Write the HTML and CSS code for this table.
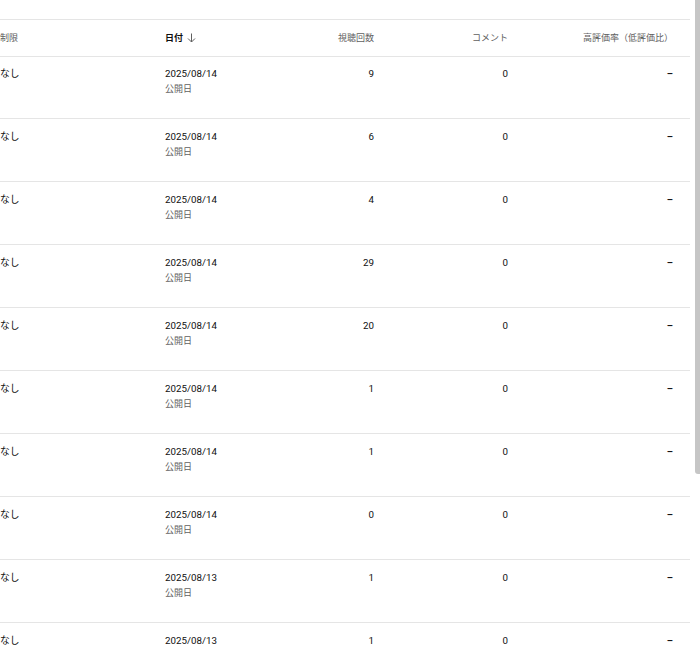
FILE: index.html
```html
<!DOCTYPE html>
<html lang="ja">
<head>
<meta charset="utf-8">
<link rel="stylesheet" href="styles.css">
</head>
<body>
<div class="table">
  <div class="row head">
    <div class="cell">制限</div>
    <div class="cell sorted">日付 <svg class="arrow" width="9" height="10" viewBox="0 0 9 10"><path d="M4.5 0.5V9M1 5.5L4.5 9L8 5.5" fill="none" stroke="#606060" stroke-width="1"/></svg></div>
    <div class="cell num">視聴回数</div>
    <div class="cell num">コメント</div>
    <div class="cell num">高評価率（低評価比）</div>
  </div>
  <div class="row"><div class="cell">なし</div><div class="cell date">2025/08/14<span class="sub">公開日</span></div><div class="cell num">9</div><div class="cell num">0</div><div class="cell num dash">–</div></div>
  <div class="row"><div class="cell">なし</div><div class="cell date">2025/08/14<span class="sub">公開日</span></div><div class="cell num">6</div><div class="cell num">0</div><div class="cell num dash">–</div></div>
  <div class="row"><div class="cell">なし</div><div class="cell date">2025/08/14<span class="sub">公開日</span></div><div class="cell num">4</div><div class="cell num">0</div><div class="cell num dash">–</div></div>
  <div class="row"><div class="cell">なし</div><div class="cell date">2025/08/14<span class="sub">公開日</span></div><div class="cell num">29</div><div class="cell num">0</div><div class="cell num dash">–</div></div>
  <div class="row"><div class="cell">なし</div><div class="cell date">2025/08/14<span class="sub">公開日</span></div><div class="cell num">20</div><div class="cell num">0</div><div class="cell num dash">–</div></div>
  <div class="row"><div class="cell">なし</div><div class="cell date">2025/08/14<span class="sub">公開日</span></div><div class="cell num">1</div><div class="cell num">0</div><div class="cell num dash">–</div></div>
  <div class="row"><div class="cell">なし</div><div class="cell date">2025/08/14<span class="sub">公開日</span></div><div class="cell num">1</div><div class="cell num">0</div><div class="cell num dash">–</div></div>
  <div class="row"><div class="cell">なし</div><div class="cell date">2025/08/14<span class="sub">公開日</span></div><div class="cell num">0</div><div class="cell num">0</div><div class="cell num dash">–</div></div>
  <div class="row"><div class="cell">なし</div><div class="cell date">2025/08/13<span class="sub">公開日</span></div><div class="cell num">1</div><div class="cell num">0</div><div class="cell num dash">–</div></div>
  <div class="row"><div class="cell">なし</div><div class="cell date">2025/08/13<span class="sub">公開日</span></div><div class="cell num">1</div><div class="cell num">0</div><div class="cell num dash">–</div></div>
</div>
<div class="scrollbar"></div>
</body>
</html>
```
FILE: styles.css
```css
html, body {
  margin: 0;
  padding: 0;
  background: #ffffff;
  overflow: hidden;
}
body {
  font-family: Roboto, "Noto Sans CJK JP", sans-serif;
  font-size: 9.75px;
  color: #0f0f0f;
  height: 651px;
  position: relative;
}
.table {
  padding-top: 19px;
  width: 690px;
}
.row {
  display: grid;
  grid-template-columns: 165px 100px 109px 134px 165px;
  height: 62px;
  border-bottom: 1px solid #e5e5e5;
  box-sizing: content-box;
}
.row .cell {
  padding-top: 10px;
  line-height: 15px;
}
.head + .row {
  height: 61px;
}
.head + .row .cell {
  padding-top: 9px;
}
.row.head {
  height: 36px;
  border-top: 1px solid #e5e5e5;
  align-items: center;
  color: #606060;
  font-size: 9px;
}
.row.head .cell {
  padding-top: 0;
  line-height: 14px;
}
.head .sorted {
  color: #0f0f0f;
  font-weight: bold;
  display: flex;
  align-items: center;
  gap: 4px;
}
.arrow {
  display: block;
}
.num {
  text-align: right;
}
.dash {
  font-weight: bold;
  color: #0f0f0f;
}
.date .sub {
  display: block;
  color: #606060;
  font-size: 9px;
  line-height: 14px;
  margin-top: 1px;
}
.scrollbar {
  position: absolute;
  top: 0;
  right: 0;
  width: 5px;
  height: 474px;
  background: #c6c6c6;
  border-bottom-left-radius: 3px;
}
```
